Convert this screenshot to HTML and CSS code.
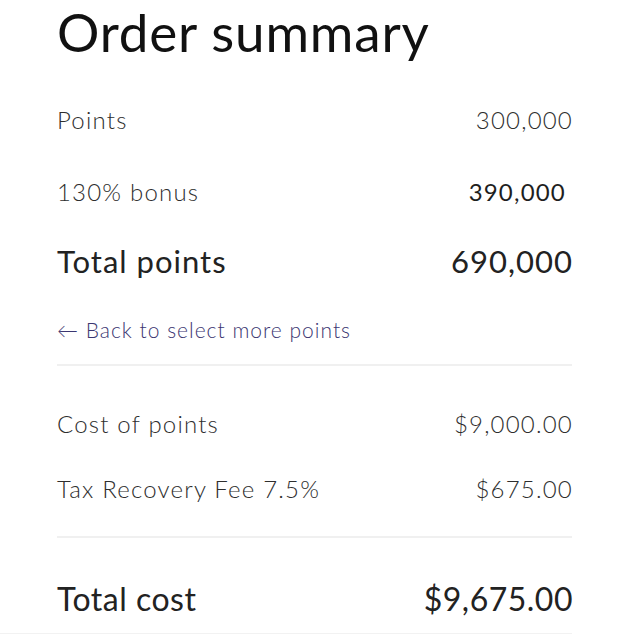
FILE: index.html
```html
<!DOCTYPE html>
<html>
<head>
    <meta charset="UTF-8">
    <title>Order summary</title>
    <link rel="stylesheet" href="styles.css">
</head>
<body>
    <!-- Order Summary Panel -->
    <div class="summary">
        <h1>Order summary</h1>

        <!-- Points breakdown -->
        <div class="row row-light">
            <span>Points</span>
            <span class="value">300,000</span>
        </div>
        <div class="row row-light">
            <span>130% bonus</span>
            <span class="value bonus-value">390,000</span>
        </div>
        <div class="row row-total row-points">
            <span>Total points</span>
            <span class="value">690,000</span>
        </div>
        <a href="#" class="back-link">&larr; Back to select more points</a>

        <!-- Cost breakdown -->
        <div class="cost-section">
            <div class="row row-light row-cost">
                <span>Cost of points</span>
                <span class="value">$9,000.00</span>
            </div>
            <div class="row row-light row-cost">
                <span>Tax Recovery Fee 7.5%</span>
                <span class="value">$675.00</span>
            </div>
        </div>
        <div class="row row-total row-grand">
            <span>Total cost</span>
            <span class="value">$9,675.00</span>
        </div>
    </div>
</body>
</html>
```

FILE: styles.css
```css
/* General Styling */
body {
    font-family: 'Lato', 'Noto Sans', sans-serif;
    margin: 0;
    background-color: #fff;
    color: #333;
}

/* Summary panel */
.summary {
    width: 515px;
    padding-left: 57px;
    border-bottom: 1px solid #f2f2f2;
}

h1 {
    margin: 0;
    font-size: 53px;
    line-height: 64px;
    font-weight: 400;
    letter-spacing: 0.8px;
    color: #111;
    padding-bottom: 19px;
}

.row {
    display: flex;
    justify-content: space-between;
    align-items: center;
}

.row .value {
    margin-right: -1px;
}

.row-light {
    height: 72px;
    font-size: 24px;
    font-weight: 300;
    letter-spacing: 1.2px;
    color: #2e2e2e;
}

.bonus-value {
    font-weight: 400;
    color: #1e1e1e;
    padding-right: 7px;
}

.row-total {
    font-weight: 400;
    color: #222;
}

.row-points {
    height: 68px;
    font-size: 31px;
    letter-spacing: 1px;
}

.back-link {
    display: block;
    height: 69px;
    line-height: 69px;
    font-size: 21px;
    font-weight: 300;
    letter-spacing: 1px;
    color: #3b3671;
    text-decoration: none;
    border-bottom: 2px solid #f0f0f0;
}

.cost-section {
    padding-top: 25px;
    padding-bottom: 15px;
    border-bottom: 2px solid #f0f0f0;
}

.row-cost {
    height: 65px;
}

.row-grand {
    margin-top: 26px;
    height: 69px;
    font-size: 32px;
    letter-spacing: 0.5px;
}
```
